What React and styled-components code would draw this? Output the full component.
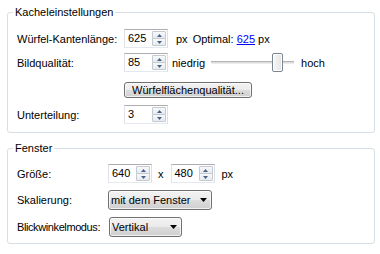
import React from 'react';
import styled, { createGlobalStyle } from 'styled-components';

const Global = createGlobalStyle`
  html, body { margin: 0; padding: 0; background: #fff; }
  body {
    font-family: "Liberation Sans", Arial, sans-serif;
    font-size: 11px;
    color: #000;
  }
`;

const Page = styled.div`
  width: 380px;
  height: 254px;
  box-sizing: border-box;
  padding: 6px 5px 0 7px;
  display: flex;
  flex-direction: column;
  gap: 9px;
`;

const Group = styled.fieldset`
  margin: 0;
  min-width: 0;
  padding: ${(p) => p.$pt}px 8px ${(p) => p.$pb}px 9px;
  border: 1px solid #d5dfe5;
  border-radius: 3px;
`;

const Legend = styled.legend`
  margin-left: -4px;
  padding: 0 2px;
  line-height: 13px;
  font-size: 11px;
`;

const Rows = styled.div`
  display: flex;
  flex-direction: column;
`;

const Row = styled.div`
  display: flex;
  align-items: center;
  height: ${(p) => p.$h || 19}px;
  margin-top: ${(p) => p.$mt || 0}px;
  white-space: nowrap;
`;

const Label = styled.span`
  width: ${(p) => p.$w}px;
  flex: none;
  letter-spacing: ${(p) => p.$ls || 0}px;
`;

const Text = styled.span`
  margin-left: ${(p) => p.$ml || 0}px;
`;

const Link = styled.a`
  color: #0000ff;
  text-decoration: underline;
`;

const SpinBox = styled.div`
  width: 44px;
  height: 19px;
  box-sizing: border-box;
  border: 1px solid;
  border-color: #abadb3 #dbdfe6 #e3e9ef #e2e3ea;
  background: #fff;
  display: flex;
  flex: none;
`;

const SpinValue = styled.span`
  flex: 1;
  padding-left: 3px;
  line-height: 17px;
`;

const SpinButtons = styled.div`
  width: 14px;
  padding: 1px 1px 1px 0;
  display: flex;
  flex-direction: column;
`;

const SpinButton = styled.div`
  flex: 1;
  border: 1px solid #c5cad1;
  border-radius: 1px;
  background: linear-gradient(#f7f9fb, #e6ebf0);
  display: flex;
  align-items: center;
  justify-content: center;
  & + & { margin-top: -1px; }
`;

const Sep = styled.span`
  margin: 0 7px 0 6px;
`;

const Slider = styled.div`
  position: relative;
  width: 83px;
  height: 19px;
  margin-left: 6px;
  display: flex;
  align-items: center;
  flex: none;
`;

const Track = styled.div`
  flex: 1;
  height: 3px;
  box-sizing: border-box;
  border-top: 1px solid #b4b4b4;
  border-bottom: 1px solid #ececec;
  background: #dcdcdc;
`;

const Thumb = styled.div`
  position: absolute;
  top: 0;
  width: 11px;
  height: 19px;
  box-sizing: border-box;
  border: 1px solid #7a8691;
  border-radius: 2px;
  background: linear-gradient(90deg, #f8f8f8, #e4e4e4);
  box-shadow: inset 0 0 0 1px #ffffff;
`;

const PushButton = styled.button`
  width: 128px;
  height: 16px;
  padding: 0;
  margin: 0;
  box-sizing: border-box;
  border: 1px solid #707070;
  border-radius: 3px;
  background: linear-gradient(#f2f2f2 0%, #ebebeb 50%, #dddddd 50%, #cfcfcf 100%);
  box-shadow: inset 0 0 0 1px rgba(255, 255, 255, 0.7);
  font: inherit;
  line-height: 13px;
  color: #000;
  text-align: center;
`;

const Combo = styled.div`
  width: ${(p) => p.$w}px;
  height: 20px;
  box-sizing: border-box;
  border: 1px solid #707070;
  border-radius: 3px;
  background: linear-gradient(#f2f2f2 0%, #ebebeb 50%, #dddddd 50%, #cfcfcf 100%);
  box-shadow: inset 0 0 0 1px rgba(255, 255, 255, 0.7);
  display: flex;
  align-items: center;
  padding: 0 4px 0 2px;
  flex: none;
`;

const ComboText = styled.span`
  flex: 1;
`;

const UpArrow = () => (
  <svg width="5" height="3" viewBox="0 0 5 3">
    <path d="M2.5 0 L5 3 L0 3 Z" fill="#4d6185" />
  </svg>
);
const DownArrow = () => (
  <svg width="5" height="3" viewBox="0 0 5 3">
    <path d="M0 0 L5 0 L2.5 3 Z" fill="#4d6185" />
  </svg>
);
const ComboArrow = () => (
  <svg width="7" height="4" viewBox="0 0 7 4">
    <path d="M0 0 L7 0 L3.5 4 Z" fill="#000" />
  </svg>
);

const Spin = ({ value }) => (
  <SpinBox>
    <SpinValue>{value}</SpinValue>
    <SpinButtons>
      <SpinButton><UpArrow /></SpinButton>
      <SpinButton><DownArrow /></SpinButton>
    </SpinButtons>
  </SpinBox>
);

const TrackBar = ({ value, min = 0, max = 100 }) => {
  const pos = Math.round(((value - min) / (max - min)) * 72);
  return (
    <Slider>
      <Track />
      <Thumb style={{ left: `${pos}px` }} />
    </Slider>
  );
};

export default function App() {
  return (
    <>
      <Global />
      <Page>
        <Group $pt={10} $pb={8}>
          <Legend>Kacheleinstellungen</Legend>
          <Rows>
            <Row>
              <Label $w={107}>Würfel-Kantenlänge:</Label>
              <Spin value="625" />
              <Text $ml={8}>px</Text>
              <Text $ml={5}>Optimal: <Link>625</Link> px</Text>
            </Row>
            <Row $mt={5}>
              <Label $w={107}>Bildqualität:</Label>
              <Spin value="85" />
              <Text $ml={4}>niedrig</Text>
              <TrackBar value={85} />
              <Text $ml={7}>hoch</Text>
            </Row>
            <Row $mt={10} $h={16}>
              <Label $w={107} />
              <PushButton>Würfelflächenqualität...</PushButton>
            </Row>
            <Row $mt={7}>
              <Label $w={107}>Unterteilung:</Label>
              <Spin value="3" />
            </Row>
          </Rows>
        </Group>
        <Group $pt={9} $pb={6}>
          <Legend>Fenster</Legend>
          <Rows>
            <Row>
              <Label $w={91}>Größe:</Label>
              <Spin value="640" />
              <Sep>x</Sep>
              <Spin value="480" />
              <Text $ml={7}>px</Text>
            </Row>
            <Row $mt={7} $h={20}>
              <Label $w={91}>Skalierung:</Label>
              <Combo $w={104}>
                <ComboText>mit dem Fenster</ComboText>
                <ComboArrow />
              </Combo>
            </Row>
            <Row $mt={7} $h={20}>
              <Label $w={92} $ls={-0.4}>Blickwinkelmodus:</Label>
              <Combo $w={73}>
                <ComboText>Vertikal</ComboText>
                <ComboArrow />
              </Combo>
            </Row>
          </Rows>
        </Group>
      </Page>
    </>
  );
}
